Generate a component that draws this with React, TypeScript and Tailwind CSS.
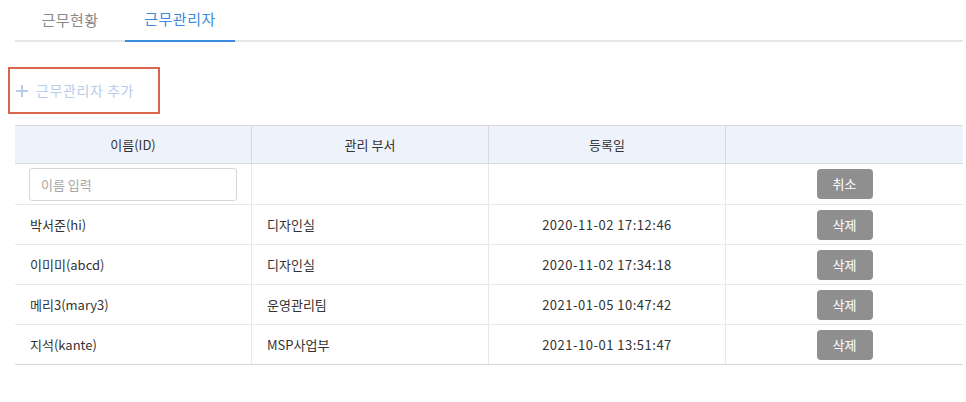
import React from "react";

const rows = [
  { name: "박서준(hi)", dept: "디자인실", date: "2020-11-02 17:12:46" },
  { name: "이미미(abcd)", dept: "디자인실", date: "2020-11-02 17:34:18" },
  { name: "메리3(mary3)", dept: "운영관리팀", date: "2021-01-05 10:47:42" },
  { name: "지석(kante)", dept: "MSP사업부", date: "2021-10-01 13:51:47" },
];

const font = { fontFamily: '"Noto Sans CJK KR", "Noto Sans", sans-serif' };

export default function App() {
  return (
    <div className="w-[966px] h-[402px] bg-white text-[#333]" style={font}>
      <div className="pl-[15px] pr-[3px]">
        <div className="flex border-b-2 border-[#e6e6e6] h-[42px]">
          <div className="w-[110px] h-[40px] flex items-center justify-center text-[15px] tracking-[0.5px] text-[#8a8a8a]">
            근무현황
          </div>
          <div className="w-[110px] h-[42px] -mb-[2px] border-b-2 border-[#3b8be0] flex items-center justify-center pb-[2px] text-[15px] tracking-[0.5px] text-[#3b8be0]">
            근무관리자
          </div>
        </div>
      </div>
      <div className="pl-[8px] pt-[25px]">
        <div className="w-[152px] h-[47px] border-2 border-[#d9664c] flex items-center pl-[5px] gap-[7px] text-[14px] tracking-[0.6px] text-[#b9cbeb]">
          <svg width="14" height="14" viewBox="0 0 14 14">
            <path d="M7 1v12M1 7h12" stroke="#b9cbeb" strokeWidth="2" />
          </svg>
          <span>근무관리자 추가</span>
        </div>
      </div>
      <div className="pl-[15px] pt-[11px]">
        <div className="w-[948px] text-[13px]">
          <div className="grid grid-cols-4 h-[39px] bg-[#eef3fb] border-t border-b border-[#d9d9d9]">
            <div className="flex items-center justify-center border-r border-[#d9d9d9]">이름(ID)</div>
            <div className="flex items-center justify-center border-r border-[#d9d9d9]">관리 부서</div>
            <div className="flex items-center justify-center border-r border-[#d9d9d9]">등록일</div>
            <div></div>
          </div>
          <div className="grid grid-cols-4 h-[41px] border-b border-[#e8e8e8]">
            <div className="flex items-center pl-[14px] border-r border-[#e8e8e8]">
              <input
                placeholder="이름 입력"
                className="w-[208px] h-[33px] border border-[#d6d6d6] rounded-[3px] px-[11px] text-[13px] placeholder-[#a8a8a8] outline-none"
                style={font}
              />
            </div>
            <div className="border-r border-[#e8e8e8]"></div>
            <div className="border-r border-[#e8e8e8]"></div>
            <div className="flex items-center justify-center">
              <button className="w-[56px] h-[30px] rounded-[4px] bg-[#8f8f8f] text-white text-[13px]">취소</button>
            </div>
          </div>
          {rows.map((r, i) => (
            <div
              key={i}
              className={`grid grid-cols-4 h-[40px] border-b ${i === rows.length - 1 ? "border-[#d9d9d9]" : "border-[#e8e8e8]"}`}
            >
              <div className="flex items-center pl-[15px] border-r border-[#e8e8e8]">{r.name}</div>
              <div className="flex items-center pl-[15px] border-r border-[#e8e8e8]">{r.dept}</div>
              <div className="flex items-center justify-center tracking-[0.5px] border-r border-[#e8e8e8]">{r.date}</div>
              <div className="flex items-center justify-center">
                <button className="w-[56px] h-[30px] rounded-[4px] bg-[#8f8f8f] text-white text-[13px]">삭제</button>
              </div>
            </div>
          ))}
        </div>
      </div>
    </div>
  );
}
